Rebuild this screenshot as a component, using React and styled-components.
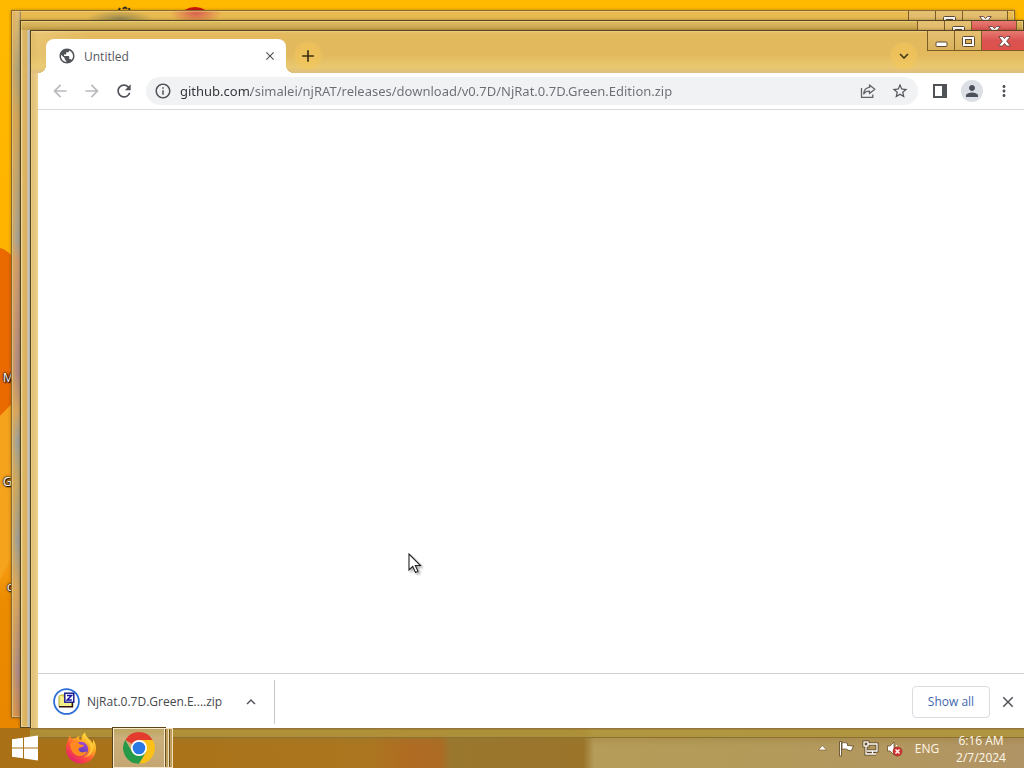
import React from 'react';
import styled, { createGlobalStyle, css } from 'styled-components';
import {
  MdArrowBack, MdArrowForward, MdRefresh, MdInfoOutline, MdStarBorder,
  MdMoreVert, MdPerson, MdClose, MdExpandMore, MdExpandLess, MdPublic, MdAdd,
} from 'react-icons/md';

const GlobalStyle = createGlobalStyle`
  *, *::before, *::after { box-sizing: border-box; }
  body {
    margin: 0;
    font-family: "Open Sans", "Noto Sans", sans-serif;
    font-size: 12px;
    color: #3c4043;
  }
  button, input { font: inherit; color: inherit; }
`;

const Desktop = styled.div`
  position: relative;
  height: 100vh;
  overflow: hidden;
  background: linear-gradient(#ffba00, #ffb400 240px, #f8a010 420px, #f79d14 560px, #ec8c00 600px, #e88600);
`;

const Wallpaper = styled.svg`
  position: absolute;
  inset: 0;
  width: 100%;
  height: 100%;
`;

const DesktopLabel = styled.span`
  position: absolute;
  left: ${(p) => p.$x}px;
  top: ${(p) => p.$y}px;
  color: #fff;
  line-height: 16px;
  text-shadow: 0 0 2px #000, 1px 1px 1px #000, 0 0 3px #000;
`;

const frames = {
  back: css`
    left: 11px; top: 10px; right: 9px; bottom: 50px;
    border-color: #8a6a2c;
    background:
      radial-gradient(ellipse 34px 9px at 108px 8px, #98894f, transparent),
      radial-gradient(ellipse 26px 12px at 184px 2px, #d8604e, transparent),
      linear-gradient(90deg, transparent 9px, #e9ba50 9px) top / 100% 9px no-repeat,
      linear-gradient(90deg, rgba(224, 168, 80, 0.7) 0, transparent 5px, transparent 7px, #8a7f66 9px),
      linear-gradient(#e3bd70, #b0a57c 60px, #d0a657 110px, #a9a493 230px, #cf9c6c 250px, #b08a84 360px, #d6a860 400px, #9fa39b 430px, #c9a862 470px, #a0a095 530px, #d8a85c 580px, #ad8a86 660px, #cf8d50);
  `,
  middle: css`
    left: 20px; top: 20px; right: 0; bottom: 40px;
    background:
      linear-gradient(#dfbd62, #c6a04a) top / 100% 9px no-repeat,
      linear-gradient(90deg, #e9d090 0, #ddb766 2px, #dcb25e 6px, #cfd3d2 7px, #c6cacb 9px);
  `,
  front: css`
    left: 30px; top: 30px; right: -10px; bottom: 30px;
    background: linear-gradient(90deg, #dfbd74, #edd08b 7px, #e4bb62 60px) top / 100% 100%;
  `,
};

const Window = styled.section`
  position: absolute;
  display: flex;
  flex-direction: column;
  border: 1px solid #554520;
  box-shadow: 0 0 3px rgba(60, 40, 0, 0.4), inset 0 0 0 1px rgba(255, 235, 170, 0.35);
  ${(p) => frames[p.$frame]}
`;

const Caption = styled.header`
  display: flex;
  align-items: flex-start;
  flex: none;
  height: 42px;
  padding: 0 6px 0 15px;
  background: ${(p) => (p.$glass
    ? 'linear-gradient(rgba(238,205,130,.5), rgba(228,184,88,.5) 3px, rgba(226,184,92,.6) 24px, rgba(233,202,112,.9) 36px, #dfbd80)'
    : 'none')};
`;

const Spacer = styled.div`
  flex: 1;
`;

const Tab = styled.div`
  position: relative;
  display: flex;
  align-items: center;
  width: 240px;
  height: 34px;
  margin-top: 8px;
  padding: 0 8px 0 12px;
  gap: 8px;
  border-radius: 8px 8px 0 0;
  background: #fff;

  &::before, &::after {
    content: "";
    position: absolute;
    bottom: 0;
    width: 8px;
    height: 8px;
  }
  &::before {
    left: -8px;
    background: radial-gradient(circle at 0 0, transparent 8px, #fff 8px);
  }
  &::after {
    right: -8px;
    background: radial-gradient(circle at 100% 0, transparent 8px, #fff 8px);
  }
  svg { color: #505459; }
`;

const TabTitle = styled.span`
  flex: 1;
  color: #55595e;
`;

const PlainButton = styled.button`
  display: flex;
  align-items: center;
  justify-content: center;
  flex: none;
  border: 0;
  padding: 0;
  background: none;
  width: ${(p) => p.$size || 28}px;
  height: ${(p) => p.$size || 28}px;
  border-radius: 50%;
  color: ${(p) => (p.$dim ? '#b9bbbe' : '#4f5358')};
`;

const GlowButton = styled(PlainButton)`
  margin: ${(p) => p.$margin};
  color: #3c2f14;
  background: radial-gradient(circle, rgba(244, 198, 88, 0.6) 50%, rgba(244, 198, 88, 0));
`;

const WindowControls = styled.div`
  display: flex;
  height: 20px;
  border: solid #7a5d28;
  border-width: 0 1px 1px;
`;

const ControlButton = styled.button`
  display: flex;
  align-items: center;
  justify-content: center;
  width: ${(p) => (p.$close ? 44 : 27)}px;
  padding: 1px 0 0;
  border: 0;
  border-right: ${(p) => (p.$close ? 0 : '1px solid #7a5d28')};
  background: ${(p) => (p.$red ? 'linear-gradient(#e77a72, #da5350 50%, #e0504c)' : 'linear-gradient(#e6c173, #d9b15a)')};
`;

const Toolbar = styled.div`
  display: flex;
  align-items: center;
  flex: none;
  gap: 4px;
  height: 37px;
  margin: 0 7px;
  padding: 0 8px;
  background: #fff;
  border-bottom: 1px solid #d8dadd;
`;

const Omnibox = styled.label`
  display: flex;
  align-items: center;
  flex: 1;
  height: 28px;
  margin: 0 4px;
  padding: 0 4px;
  gap: 4px;
  border-radius: 14px;
  background: #f1f2f4;
`;

const Address = styled.input`
  flex: 1;
  min-width: 0;
  height: 20px;
  padding: 0;
  border: 0;
  outline: 0;
  font-family: "Noto Sans", "Open Sans", sans-serif;
  font-size: 13px;
  color: transparent;
  background: linear-gradient(90deg, #303337 71px, #6a6e73 71px);
  background-clip: text;
`;

const Avatar = styled.span`
  display: flex;
  align-items: center;
  justify-content: center;
  width: 22px;
  height: 22px;
  border-radius: 50%;
  background: #dcdfe5;
  color: #4b505a;
`;

const Page = styled.main`
  flex: 1;
  margin: 0 7px;
  background: #fff;
`;

const DownloadShelf = styled.footer`
  display: flex;
  align-items: center;
  flex: none;
  height: 56px;
  margin: 0 7px 8px;
  padding: 0 4px 0 15px;
  background: #fff;
  border-top: 1px solid #cfd1d4;
`;

const DownloadItem = styled.div`
  display: flex;
  align-items: center;
  width: 222px;
  height: 44px;
  padding-right: 9px;
  gap: 7px;
  border-right: 1px solid #c6c9cc;
`;

const FileName = styled.span`
  flex: 1;
  white-space: nowrap;
  color: #45484c;
`;

const ShowAll = styled.button`
  width: 78px;
  height: 32px;
  margin-right: 4px;
  padding: 0;
  border: 1px solid #d9dce1;
  border-radius: 4px;
  background: #fff;
  color: #3f68b0;
`;

const Taskbar = styled.nav`
  position: absolute;
  left: 0;
  right: 0;
  bottom: 0;
  display: flex;
  align-items: center;
  height: 40px;
  background:
    linear-gradient(#94743a 1px, rgba(176, 150, 58, 0.85) 2px, rgba(176, 148, 60, 0.85) 9px, #8c7034 9px, #8c7034 10px, rgba(150, 122, 50, 0.3) 10px, transparent 18px) 30px 0 no-repeat,
    linear-gradient(90deg, #a97015, #ab761f 36%, #b06b22 40%, #ac6b24 43%, #99772d 44%, #9b742a 57%, #b59c58 58%, #b39a5a 75%, #b19465);
`;

const StartButton = styled.button`
  display: flex;
  align-items: center;
  justify-content: center;
  width: 50px;
  height: 40px;
  padding: 0;
  border: 0;
  background: none;
`;

const AppButton = styled(StartButton)`
  width: ${(p) => (p.$open ? 52 : 62)}px;
  ${(p) => p.$open && css`
    margin-left: 1px;
    border: 1px solid #f6e8cc;
    outline: 1px solid #5c4316;
    background: linear-gradient(#bda660, #cbb07c 25%, #c4a672);
  `}
`;

const StackEdge = styled.span`
  width: 4px;
  height: 40px;
  border: solid #f0dfba;
  border-width: 1px 1px 1px 0;
  background: linear-gradient(90deg, #6b501f 1px, #c0a05c 1px);
`;

const TrayButton = styled.button`
  display: flex;
  align-items: center;
  justify-content: center;
  width: 24px;
  height: 24px;
  padding: 0;
  border: 0;
  background: none;
`;

const Language = styled.button`
  width: 42px;
  margin-right: 6px;
  padding: 0;
  border: 0;
  background: none;
  color: #fff4e4;
`;

const Clock = styled.time`
  width: 54px;
  margin-right: 16px;
  padding-top: 2px;
  color: #fff8ec;
  line-height: 17px;
  text-align: center;
  white-space: nowrap;
`;

const GlyphMin = () => (
  <svg width="13" height="11" viewBox="0 0 13 11"><rect x="1" y="6" width="11" height="4.5" rx="1" fill="#fff" stroke="#5d4a35" /></svg>
);
const GlyphMax = () => (
  <svg width="13" height="11" viewBox="0 0 13 11">
    <rect x=".5" y=".5" width="12" height="10" rx="1" fill="#fff" stroke="#5d4a35" />
    <rect x="3.5" y="3.5" width="6" height="4" fill="#d9b15a" stroke="#5d4a35" />
  </svg>
);
const GlyphClose = () => (
  <svg width="13" height="11" viewBox="0 0 13 11">
    <path d="M.7.5H4.5L6.500 2.600 8.500.5H12.300L8.700 5.200 12.500 10H8.500L6.500 7.500 4.500 10H.5L4.300 5.200Z" fill="#fff" stroke="#6a4540" strokeWidth=".9" />
  </svg>
);

const Controls = ({ red }) => (
  <WindowControls>
    <ControlButton aria-label="Minimize"><GlyphMin /></ControlButton>
    <ControlButton aria-label="Maximize"><GlyphMax /></ControlButton>
    <ControlButton aria-label="Close" $close $red={red}><GlyphClose /></ControlButton>
  </WindowControls>
);

const ShareIcon = () => (
  <svg width="16" height="16" viewBox="0 0 16 16" fill="none" stroke="#5f6368" strokeWidth="1.300">
    <path d="M1.500 5V14.300H12.800V11.500" />
    <path d="M9.500 2 14.800 6.300 9.500 10.600V8.200C6.800 8.200 5 9 3.700 10.900 4 7.300 6 4.800 9.500 4.400Z" strokeLinejoin="round" />
  </svg>
);

const PanelIcon = () => (
  <svg width="14" height="14" viewBox="0 0 14 14">
    <rect x="1" y="1" width="12" height="12" fill="#fff" stroke="#4f5358" strokeWidth="2" />
    <rect x="9" y="1" width="4" height="12" fill="#4f5358" />
  </svg>
);

const ZipIcon = () => (
  <svg width="27" height="27" viewBox="0 0 27 27">
    <circle cx="13.500" cy="13.500" r="12.400" fill="#fff" stroke="#2d6fd6" strokeWidth="1.800" />
    <path d="M6 8.500 7.500 7H11V9H19V18.500H6Z" fill="#f6f08a" stroke="#a8a52c" />
    <path d="M6 18.800H19.500V12" fill="none" stroke="#301010" strokeWidth="1.400" />
    <rect x="11.800" y="5.200" width="9" height="9" fill="#fff" stroke="#101090" strokeWidth="1.400" />
    <path d="M14 7.500H18.500L14.200 12H18.800" fill="none" stroke="#1414a0" strokeWidth="1.500" />
  </svg>
);

const WindowsLogo = () => (
  <svg width="28" height="26" viewBox="0 0 28 26" fill="#fff">
    <path d="M1 4.300 12 2.700V12.500H1ZM13 2.500 27 .5V12.500H13ZM1 13.500H12V23.300L1 21.700ZM13 13.500H27V25.500L13 23.500Z" />
  </svg>
);

const FirefoxLogo = () => (
  <svg width="32" height="32" viewBox="0 0 32 32">
    <defs>
      <linearGradient id="flame" x1=".85" y1=".05" x2=".2" y2=".95">
        <stop offset="0" stopColor="#fff04f" /><stop offset=".35" stopColor="#ffa61f" />
        <stop offset=".65" stopColor="#ff4f3a" /><stop offset="1" stopColor="#e01f73" />
      </linearGradient>
      <linearGradient id="globe" x1=".7" y1="0" x2=".3" y2="1">
        <stop offset="0" stopColor="#a648d8" /><stop offset="1" stopColor="#4a3da8" />
      </linearGradient>
    </defs>
    <path d="M3.200 7.500C3.500 5.500 4.500 4.300 5.200 3.500 5.500 5 6 6 7 6.800 8.500 6 10 6 11 6.200 12 5 13 4.500 14.500 4 14 5.500 14 6.500 14.500 7.500L16.500 8C16 5 17.500 2 20 .5 20.500 4 23 6 25.500 8.500 26.500 9.500 27.200 10.500 27.500 11.500 28.200 10.500 28.200 9 28 7.500 30 10 31 13 31 16.500 31 25 24.500 31.500 16 31.500S1 25 1 16.500C1 13 2 10 3.200 7.500Z" fill="url(#flame)" />
    <circle cx="16" cy="17" r="7.200" fill="url(#globe)" />
    <path d="M5 12C8 9 12 9 15 12.500L19 13C18.500 15 16 15.500 14 16 13 17 13.500 19 15.500 20 18 21 20 19.500 22 19.500 21 22 18 24.500 14.500 24 9 23.500 5.500 19 5 12Z" fill="#ff8a22" />
    <path d="M19.500 4C21 9 26.500 10 25.500 17 25 21 22 24 18.500 25.500 25 25 29 20 28 14 27 9.500 22 9 19.500 4Z" fill="#ffcf3d" opacity=".8" />
  </svg>
);

const ChromeLogo = () => (
  <svg width="32" height="32" viewBox="0 0 32 32">
    <path d="M16 16 2.300 8A15.800 15.800 0 0 1 29.700 8Z" fill="#e33b2e" />
    <path d="M16 8H29.700A15.800 15.800 0 0 1 16 31.800L23 20Z" fill="#fbc116" />
    <path d="M2.300 8A15.800 15.800 0 0 0 16 31.800L22.900 20 9.100 20Z" fill="#269a48" />
    <circle cx="16" cy="16" r="8" fill="#fff" />
    <circle cx="16" cy="16" r="6.300" fill="#2a78e4" />
  </svg>
);

const TrayArrow = () => (
  <svg width="9" height="6" viewBox="0 0 9 6"><path d="M4.500.5 8.500 5H.5Z" fill="#fff" stroke="#725526" strokeWidth=".6" /></svg>
);
const TrayFlag = () => (
  <svg width="17" height="17" viewBox="0 0 17 17" fill="#fff" stroke="#5a4220" strokeWidth=".8">
    <path d="M1.500 1.500H3.500V16H1.500Z" />
    <path d="M4 3C7 2 8 3 9.500 3.500V5.500L15.500 6 13.500 10.500C11.500 11 10.500 10.500 9 9.500 7 8.500 5.500 9 4 9.500Z" />
  </svg>
);
const TrayNetwork = () => (
  <svg width="17" height="16" viewBox="0 0 17 16" fill="none">
    <g stroke="#5a4220" strokeWidth="3"><path d="M6 4H15V11H5M10.500 11V14M7 14H14M4 6V14H7" /><rect x="2" y="2" width="4" height="4" /></g>
    <g stroke="#fff" strokeWidth="1.300"><path d="M6 4H15V11H5M10.500 11V14M7 14H14M4 6V14H7" /><rect x="2" y="2" width="4" height="4" /></g>
  </svg>
);
const TrayVolume = () => (
  <svg width="17" height="17" viewBox="0 0 17 17">
    <path d="M1.500 6H4L8 2V15L4 11H1.500Z" fill="#fff" stroke="#5a4220" strokeWidth=".7" />
    <path d="M10 5Q11.500 6 11.500 8" fill="none" stroke="#fff" />
    <circle cx="11.500" cy="11.500" r="4.500" fill="#d3342f" stroke="#8e2620" strokeWidth=".6" />
    <path d="M9.500 9.500 13.500 13.500M13.500 9.500 9.500 13.500" stroke="#fff" strokeWidth="1.400" />
  </svg>
);

const Pointer = styled.svg`
  position: absolute;
  left: 408px;
  top: 553px;
  filter: drop-shadow(2px 2px 1px rgba(0, 0, 0, 0.3));
`;

export default function App() {
  return (
    <>
      <GlobalStyle />
      <Desktop>
        <Wallpaper viewBox="0 0 1024 768" preserveAspectRatio="xMinYMin slice">
          <path d="M0 248Q9 250 16 262V400L0 416Z" fill="#ea6a00" />
          <path d="M0 580 18 545V398L0 416Z" fill="#f5a31c" />
          <path d="M118 12 120 8M123 9Q125 6 127 9M130 12 129 8" stroke="#3a3020" strokeWidth="2" fill="none" />
          <ellipse cx="195" cy="16" rx="14" ry="9" fill="#d01410" />
        </Wallpaper>
        <DesktopLabel $x={3} $y={370}>M</DesktopLabel>
        <DesktopLabel $x={3} $y={474}>G</DesktopLabel>
        <DesktopLabel $x={7} $y={579}>c</DesktopLabel>

        <Window $frame="back" aria-label="Background window">
          <Caption><Spacer /><Controls /></Caption>
        </Window>
        <Window $frame="middle" aria-label="Background window">
          <Caption><Spacer /><Controls red /></Caption>
        </Window>

        <Window $frame="front" aria-label="Browser">
          <Caption $glass>
            <Tab>
              <MdPublic size={18} />
              <TabTitle>Untitled</TabTitle>
              <PlainButton $size={16} aria-label="Close tab"><MdClose size={14} /></PlainButton>
            </Tab>
            <GlowButton $margin="11px 0 0 8px" aria-label="New tab"><MdAdd size={20} /></GlowButton>
            <Spacer />
            <GlowButton $margin="11px 9px 0 0" aria-label="Search tabs"><MdExpandMore size={18} /></GlowButton>
            <Controls red />
          </Caption>
          <Toolbar>
            <PlainButton $dim aria-label="Back"><MdArrowBack size={20} /></PlainButton>
            <PlainButton $dim aria-label="Forward"><MdArrowForward size={20} /></PlainButton>
            <PlainButton aria-label="Reload"><MdRefresh size={20} /></PlainButton>
            <Omnibox>
              <PlainButton $size={26} aria-label="Site information"><MdInfoOutline size={18} /></PlainButton>
              <Address
                aria-label="Address"
                defaultValue="github.com/simalei/njRAT/releases/download/v0.7D/NjRat.0.7D.Green.Edition.zip"
              />
              <PlainButton aria-label="Share"><ShareIcon /></PlainButton>
              <PlainButton aria-label="Bookmark"><MdStarBorder size={18} /></PlainButton>
            </Omnibox>
            <PlainButton aria-label="Side panel"><PanelIcon /></PlainButton>
            <PlainButton aria-label="Profile"><Avatar><MdPerson size={18} /></Avatar></PlainButton>
            <PlainButton aria-label="Menu"><MdMoreVert size={18} /></PlainButton>
          </Toolbar>
          <Page />
          <DownloadShelf>
            <DownloadItem>
              <ZipIcon />
              <FileName>NjRat.0.7D.Green.E....zip</FileName>
              <PlainButton aria-label="Download options"><MdExpandLess size={18} /></PlainButton>
            </DownloadItem>
            <Spacer />
            <ShowAll>Show all</ShowAll>
            <PlainButton aria-label="Close downloads bar"><MdClose size={18} /></PlainButton>
          </DownloadShelf>
        </Window>

        <Taskbar>
          <StartButton aria-label="Start"><WindowsLogo /></StartButton>
          <AppButton aria-label="Firefox"><FirefoxLogo /></AppButton>
          <AppButton $open aria-label="Chrome"><ChromeLogo /></AppButton>
          <StackEdge />
          <StackEdge />
          <Spacer />
          <TrayButton aria-label="Show hidden icons"><TrayArrow /></TrayButton>
          <TrayButton aria-label="Action Center"><TrayFlag /></TrayButton>
          <TrayButton aria-label="Network"><TrayNetwork /></TrayButton>
          <TrayButton aria-label="Volume"><TrayVolume /></TrayButton>
          <Language>ENG</Language>
          <Clock>6:16 AM<br />2/7/2024</Clock>
        </Taskbar>

        <Pointer width="14" height="21" viewBox="0 0 14 21">
          <path d="M1 1V17L4.700 13.500 7.500 19.500 10 18.300 7.300 12.500H12.500Z" fill="#fff" stroke="#222" strokeWidth="1.100" />
        </Pointer>
      </Desktop>
    </>
  );
}
